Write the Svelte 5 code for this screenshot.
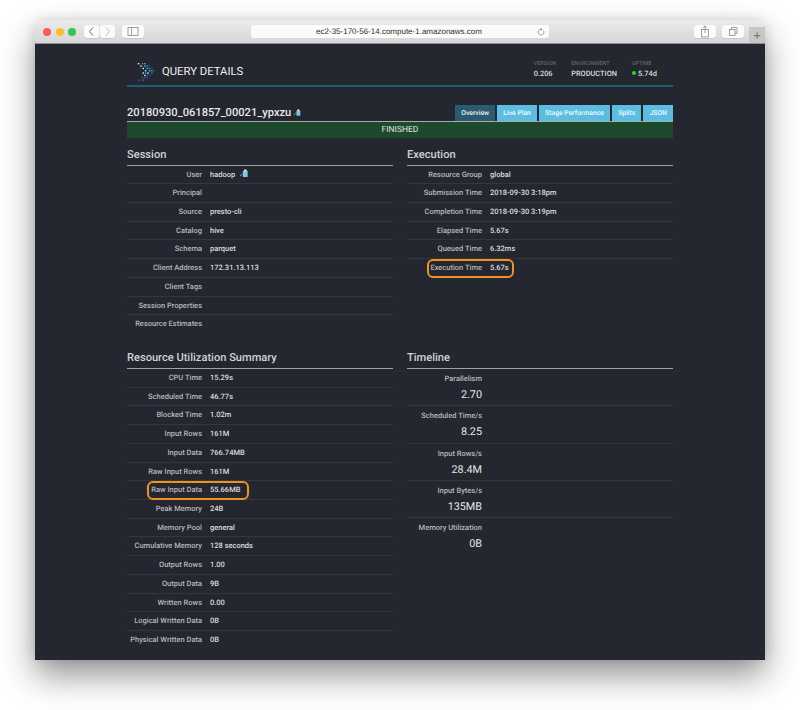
<script>
  const session = [
    ['User', 'hadoop', true], ['Principal', ''], ['Source', 'presto-cli'], ['Catalog', 'hive'], ['Schema', 'parquet'],
    ['Client Address', '172.31.13.113'], ['Client Tags', ''], ['Session Properties', ''], ['Resource Estimates', '']
  ];
  const execution = [
    ['Resource Group', 'global'], ['Submission Time', '2018-09-30 3:18pm'], ['Completion Time', '2018-09-30 3:19pm'],
    ['Elapsed Time', '5.67s'], ['Queued Time', '6.32ms'], ['Execution Time', '5.67s']
  ];
  const resources = [
    ['CPU Time', '15.29s'], ['Scheduled Time', '46.77s'], ['Blocked Time', '1.02m'], ['Input Rows', '161M'],
    ['Input Data', '766.74MB'], ['Raw Input Rows', '161M'], ['Raw Input Data', '55.66MB'], ['Peak Memory', '24B'],
    ['Memory Pool', 'general'], ['Cumulative Memory', '128 seconds'], ['Output Rows', '1.00'], ['Output Data', '9B'],
    ['Written Rows', '0.00'], ['Logical Written Data', '0B'], ['Physical Written Data', '0B']
  ];
  const timeline = [
    ['Parallelism', '2.70'], ['Scheduled Time/s', '8.25'], ['Input Rows/s', '28.4M'],
    ['Input Bytes/s', '135MB'], ['Memory Utilization', '0B']
  ];
  const tabs = ['Overview', 'Live Plan', 'Stage Performance', 'Splits', 'JSON'];
  const highlighted = ['Execution Time', 'Raw Input Data'];

  // logo dots: x, y, colour
  const dots = [
    [0, 0, '#e8eef2'], [3, 3, '#dfe8ee'], [6, 6, '#e8eef2'], [9, 9, '#dfe8ee'], [12, 12, '#e8eef2'],
    [5, 0, '#2f8fd0'], [8, 0, '#35b6e0'], [8, 3, '#35b6e0'], [11, 3, '#2f8fd0'], [11, 6, '#35c3e8'],
    [14, 6, '#2f8fd0'], [14, 9, '#38d0ee'], [17, 9, '#35b6e0'], [14, 3, '#27609c'], [17, 6, '#27609c'],
    [20, 9, '#27609c'], [17, 12, '#2f8fd0'], [14, 15, '#2d66b0'], [11, 15, '#2d66b0'], [8, 15, '#e8eef2'],
    [5, 18, '#2d66b0'], [8, 18, '#2d66b0'], [11, 18, '#2a5aa0'], [0, 21, '#2d66b0'], [3, 21, '#2a5aa0'], [6, 21, '#2d66b0'],
    [9, 12, '#2f8fd0'], [6, 12, '#e8eef2']
  ];
</script>

{#snippet copyIcon(cls)}
  <svg class={cls} viewBox="0 0 10 10" aria-hidden="true">
    <rect x="3.5" y="2" width="5.5" height="7.5" rx="0.6" fill="#7cc6e6" />
    <rect x="4.8" y="0.6" width="2.8" height="2.2" fill="#e2f4fb" />
    <rect x="0.3" y="7" width="1.4" height="1.4" fill="#8fb9cc" />
    <rect x="1.9" y="5.2" width="1.4" height="1.4" fill="#8fb9cc" />
  </svg>
{/snippet}

{#snippet rows(list)}
  {#each list as row}
    <div class="row">
      <div class="label">{row[0]}</div>
      <div class="value">{row[1]}{#if row[2]}{@render copyIcon('copy-small')}{/if}</div>
      {#if highlighted.includes(row[0])}
        <span class="mark {row[0] === 'Raw Input Data' ? 'wide' : ''}"></span>
      {/if}
    </div>
  {/each}
{/snippet}

<div class="window">
  <div class="toolbar">
    <div class="lights">
      <span class="light red"></span>
      <span class="light yellow"></span>
      <span class="light green"></span>
    </div>
    <div class="nav">
      <span class="btn nav-btn">
        <svg viewBox="0 0 14 13"><path d="M8.5 2.5 L5 6.5 L8.5 10.5" fill="none" stroke="#6b6b6b" stroke-width="1" /></svg>
      </span>
      <span class="btn nav-btn">
        <svg viewBox="0 0 14 13"><path d="M5.5 2.5 L9 6.5 L5.5 10.5" fill="none" stroke="#bdbdbd" stroke-width="1" /></svg>
      </span>
    </div>
    <span class="btn side-btn">
      <svg viewBox="0 0 22 13"><rect x="6" y="2.5" width="10" height="8" fill="none" stroke="#8a8a8a" stroke-width="0.8" /><path d="M9.5 2.5 V10.5" stroke="#8a8a8a" stroke-width="0.8" /></svg>
    </span>
    <div class="url">
      <span class="url-text">ec2-35-170-56-14.compute-1.amazonaws.com</span>
      <svg class="reload" viewBox="0 0 10 10"><path d="M7.9 3 A3.6 3.6 0 1 1 5 1.6" fill="none" stroke="#777" stroke-width="0.8" /><path d="M4.6 0 L6.8 1.6 L4.6 3.2 Z" fill="#777" /></svg>
    </div>
    <span class="btn tool-btn share">
      <svg viewBox="0 0 22 13"><rect x="7.5" y="4.5" width="7" height="7.5" fill="none" stroke="#8a8a8a" stroke-width="0.8" /><path d="M11 8 V1 M9 2.8 L11 0.8 L13 2.8" fill="none" stroke="#8a8a8a" stroke-width="0.8" /></svg>
    </span>
    <span class="btn tool-btn">
      <svg viewBox="0 0 22 13"><rect x="7.5" y="4.5" width="5.5" height="6" fill="none" stroke="#8a8a8a" stroke-width="0.8" /><path d="M9.5 4.5 V2.5 H15 V8.5 H13" fill="none" stroke="#8a8a8a" stroke-width="0.8" /></svg>
    </span>
    <span class="plus">+</span>
  </div>

  <div class="page">
    <header class="head">
      <div class="brand">
        <svg class="logo" viewBox="0 0 22 23">
          {#each dots as d}
            <rect x={d[0]} y={d[1]} width="1.8" height="1.8" fill={d[2]} />
          {/each}
        </svg>
        <span class="brand-title">QUERY DETAILS</span>
      </div>
      <div class="meta">
        <div class="meta-item"><span class="meta-label">VERSION</span><span class="meta-value">0.206</span></div>
        <div class="meta-item"><span class="meta-label">ENVIRONMENT</span><span class="meta-value">PRODUCTION</span></div>
        <div class="meta-item uptime"><span class="meta-label">UPTIME</span><span class="meta-value"><i class="dot"></i>5.74d</span></div>
      </div>
    </header>

    <div class="query-line">
      <div class="query-id">20180930_061857_00021_ypxzu{@render copyIcon('copy-big')}</div>
      <nav class="tabs">
        {#each tabs as tab, i}
          <span class="tab" class:active={i === 0}>{tab}</span>
        {/each}
      </nav>
    </div>
    <div class="status">FINISHED</div>

    <div class="grid top">
      <section>
        <h3>Session</h3>
        {@render rows(session)}
      </section>
      <section>
        <h3>Execution</h3>
        {@render rows(execution)}
      </section>
    </div>

    <div class="grid bottom">
      <section>
        <h3>Resource Utilization Summary</h3>
        {@render rows(resources)}
      </section>
      <section>
        <h3>Timeline</h3>
        {#each timeline as item}
          <div class="stat">
            <div class="stat-label">{item[0]}</div>
            <div class="stat-value">{item[1]}</div>
          </div>
        {/each}
      </section>
    </div>
  </div>
</div>

<style>
  :global(body) {
    background: #fff;
    font-family: Roboto, "Liberation Sans", sans-serif;
    text-rendering: geometricPrecision;
  }

  .window {
    box-sizing: border-box;
    width: 730px;
    height: 640px;
    margin: 20px 35px 50px;
    border-radius: 5px 5px 0 0;
    overflow: hidden;
    box-shadow: 0 16px 34px rgba(0, 0, 0, 0.42), 0 0 12px rgba(0, 0, 0, 0.12);
    display: flex;
    flex-direction: column;
  }

  .toolbar {
    height: 23px;
    flex: none;
    display: flex;
    align-items: center;
    padding: 0 0 0 8px;
    background: linear-gradient(#ebebeb, #d6d6d6);
    border-bottom: 1px solid #8f8f8f;
    position: relative;
  }
  .lights {
    display: flex;
    gap: 4.5px;
    width: 41px;
  }
  .light {
    width: 8px;
    height: 8px;
    border-radius: 50%;
  }
  .red { background: #fc5b57; }
  .yellow { background: #fdbc2e; }
  .green { background: #33c748; }
  .btn {
    background: #fbfbfb;
    border-radius: 3px;
    height: 13px;
    display: block;
    box-shadow: 0 0.5px 0.5px rgba(0, 0, 0, 0.15);
  }
  .btn svg {
    display: block;
    width: 100%;
    height: 100%;
  }
  .nav {
    display: flex;
    gap: 1px;
  }
  .nav-btn { width: 15px; }
  .side-btn {
    width: 22px;
    margin-left: 7px;
  }
  .url {
    width: 298px;
    height: 13px;
    margin-left: 107px;
    background: #fbfbfb;
    border-radius: 3px;
    position: relative;
    text-align: center;
    font: 8px/13px "Liberation Sans", sans-serif;
    color: #2d2d2d;
  }
  .url-text { position: relative; left: -1px; }
  .reload {
    position: absolute;
    right: 4px;
    top: 2.5px;
    width: 8px;
    height: 8px;
  }
  .tool-btn { width: 22px; margin-left: 6px; }
  .share { margin-left: 145px; }
  .plus {
    margin-left: 5px;
    align-self: flex-end;
    width: 16px;
    height: 16px;
    background: #c6c6c6;
    color: #6f6f6f;
    font: 13px/17px "Liberation Sans", sans-serif;
    text-align: center;
  }

  .page {
    flex: 1;
    background: #24272f;
    padding: 0 92px;
    color: #e6e6e6;
    min-height: 0;
  }

  .head {
    display: flex;
    justify-content: space-between;
    height: 41px;
    border-bottom: 2px solid #1f5f74;
  }
  .brand {
    display: flex;
    align-items: center;
    padding: 14px 0 0 10px;
  }
  .logo {
    width: 19px;
    height: 18px;
    margin-right: 6px;
  }
  .brand-title {
    font-size: 11.3px;
    color: #f0f0f0;
  }
  .meta {
    display: flex;
    padding-top: 16px;
  }
  .meta-item {
    display: flex;
    flex-direction: column;
    margin-right: 15px;
  }
  .uptime {
    width: 41px;
    margin-right: 0;
  }
  .meta-label {
    font-size: 5.5px;
    line-height: 8px;
    color: #6d7078;
  }
  .meta-value {
    font-size: 7.4px;
    font-weight: 500;
    line-height: 11px;
    color: #dcdcdc;
  }
  .dot {
    display: inline-block;
    width: 4px;
    height: 4px;
    border-radius: 50%;
    background: #1fe01f;
    margin-right: 2px;
    vertical-align: 1px;
  }

  .query-line {
    display: flex;
    justify-content: space-between;
    align-items: flex-end;
    margin-top: 17px;
    border-bottom: 1px solid #a9abb0;
  }
  .query-id {
    font-size: 11.15px;
    font-weight: 500;
    color: #e8e8e8;
    line-height: 17px;
    height: 17px;
  }
  .copy-big {
    width: 7px;
    height: 7px;
    margin-left: 3px;
  }
  .copy-small {
    width: 8.5px;
    height: 8.5px;
    margin-left: 5px;
    vertical-align: -1px;
  }
  .tabs {
    display: flex;
    gap: 2px;
  }
  .tab {
    background: #5bbde0;
    color: #f4fbfe;
    font-size: 6.8px;
    font-weight: 500;
    height: 16px;
    line-height: 16px;
    padding: 0 6.1px;
    text-align: center;
  }
  .active {
    background: #2a5b70;
    color: #f4f4f4;
  }

  .status {
    background: #1d4a2b;
    text-align: center;
    color: #e4e4e4;
    font-size: 8.5px;
    line-height: 17px;
    height: 16px;
  }

  .grid {
    display: grid;
    grid-template-columns: 266px 266px;
    column-gap: 14px;
    align-items: start;
  }
  .top { margin-top: 8.6px; height: 203.4px; }

  h3 {
    margin: 0;
    font-size: 11.1px;
    font-weight: 500;
    color: #d2d3d5;
    line-height: 16px;
    padding-bottom: 2px;
    border-bottom: 1px solid #a0a2a6;
  }

  .row {
    position: relative;
    display: flex;
    height: 18.72px;
    line-height: 17.4px;
    font-size: 7.5px;
    font-weight: 500;
    border-bottom: 1px solid #34373e;
    box-sizing: border-box;
  }
  .row:last-child { border-bottom: none; }
  .label {
    width: 75px;
    text-align: right;
    color: #b6b7ba;
    white-space: nowrap;
  }
  .value {
    margin-left: 8px;
    color: #dcdcde;
  }
  .mark {
    position: absolute;
    left: 20px;
    top: 0;
    width: 83px;
    height: 15px;
    border: 2px solid #f0931e;
    border-radius: 6px;
  }
  .mark.wide {
    width: 98px;
  }

  .stat {
    height: 37.35px;
    box-sizing: border-box;
    border-bottom: 1px solid #34373e;
    width: 100%;
  }
  .stat:last-child { border-bottom: none; }
  .stat-label {
    width: 75px;
    text-align: right;
    color: #b6b7ba;
    font-size: 7.5px;
    font-weight: 500;
    line-height: 19px;
    white-space: nowrap;
  }
  .stat-value {
    width: 75px;
    text-align: right;
    font-size: 10.8px;
    line-height: 14px;
    color: #e4e4e6;
  }
</style>
